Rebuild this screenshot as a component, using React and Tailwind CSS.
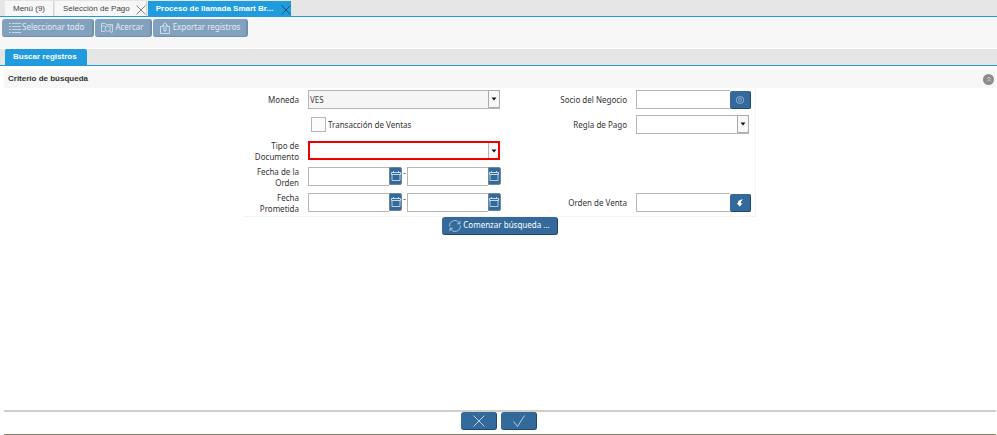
import { useState } from "react";

const toolButton =
  "flex h-[18px] items-center rounded-[3px] border-r-2 border-b border-[#6d90ad] bg-[#81a1be] text-[#e6ecf2]";
const actionButton =
  "flex items-center justify-center border-r border-b border-[#1d4a70] bg-[#336a9b] text-white";
const textInput =
  "h-[19px] min-w-0 border border-[#b5b5b5] bg-white px-px outline-none";

function CloseIcon({ className }) {
  return (
    <svg viewBox="0 0 10 10" className={className} fill="none" stroke="currentColor">
      <path d="M.5.5l9 9M9.5.5l-9 9" strokeWidth="0.8" />
    </svg>
  );
}

function ListIcon() {
  return (
    <svg viewBox="0 0 12 12" className="size-3" fill="none" stroke="currentColor" strokeWidth="0.7">
      <path d="M0 1.5h2M3 1.5h9M0 4.5h2M3 4.5h9M0 7.5h2M3 7.5h9M0 10.5h2M3 10.5h9" />
    </svg>
  );
}

function ZoomIcon() {
  return (
    <svg viewBox="0 0 12 12" className="size-3" fill="none" stroke="currentColor" strokeWidth="0.7">
      <path d="M4 9.500H.5v-8h4l1 1h6v7h-1M.5 4h4M9 4h2.500" />
      <circle cx="6.700" cy="6.700" r="2.600" />
      <path d="M8.600 8.600l2.600 3" />
    </svg>
  );
}

function ExportIcon() {
  return (
    <svg viewBox="0 0 12 12" className="size-3" fill="none" stroke="currentColor" strokeWidth="0.8">
      <path d="M4 4.500H1.500v7h9v-7H8M5 9V3.500H3.500L6 .7l2.500 2.800H7V9z" />
    </svg>
  );
}

function RefreshIcon() {
  return (
    <svg viewBox="0 0 12 12" className="size-3 text-[#c5d6e5]" fill="none" stroke="currentColor" strokeWidth="0.8">
      <path d="M.7 6.500A5.200 5.200 0 0 1 10.500 3.500M11.300 5.500A5.200 5.200 0 0 1 1.500 8.500" />
      <path d="M11 .8v3H8M1 11.200v-3h3" />
    </svg>
  );
}

function CalendarIcon() {
  return (
    <svg viewBox="0 0 10 10" className="size-[10px] shrink-0" fill="none" stroke="#d5e6f4">
      <path d="M1 3.500v6h8v-6" strokeWidth="0.8" />
      <path d="M.5 1.500h9v2h-9z" strokeWidth="0.9" />
      <path d="M2.500 0v2M7.500 0v2" strokeWidth="0.8" />
    </svg>
  );
}

function Tab({ label, active, closable }) {
  return (
    <div
      className={`flex h-[15px] items-center pl-2 ${
        active
          ? "bg-[#1f9bde] font-bold text-white"
          : "mr-px border-r border-[#d5d5d5] bg-[#f7f7f7] text-[#444]"
      } ${closable ? "pr-0" : "pr-2"}`}
    >
      <button type="button" className="whitespace-nowrap">{label}</button>
      {closable && (
        <button
          type="button"
          aria-label={`Cerrar ${label}`}
          className={`pt-0.5 ${active ? "ml-2 text-[#17415d]" : "ml-1.5 text-[#666]"}`}
        >
          <CloseIcon className="size-[10px]" />
        </button>
      )}
    </div>
  );
}

function Label({ htmlFor, children, second }) {
  return (
    <label
      htmlFor={htmlFor}
      className={`flex h-[23px] items-center justify-end text-right leading-[11px] ${second ? "col-start-3" : "col-start-1"}`}
    >
      {children}
    </label>
  );
}

function Combo({ id, options, className, disabled, required }) {
  return (
    <div className={`relative mt-0.5 h-[19px] ${className}`}>
      <select
        id={id}
        disabled={disabled}
        className={`block h-full w-full appearance-none px-px text-[#444] opacity-100 outline-none ${
          required ? "border-2 border-[#f00000]" : "border border-[#b5b5b5]"
        } ${disabled ? "bg-[#f5f5f5]" : "bg-white"}`}
      >
        {options.map((option) => (
          <option key={option}>{option}</option>
        ))}
      </select>
      <span
        className={`pointer-events-none absolute flex items-center justify-center bg-[#f8f8f8] ${
          required
            ? "inset-y-0.5 right-0.5 w-[10px] border-l border-[#b5b5b5]"
            : "top-0 right-0 h-[18px] w-3 rounded-r-[2px] border border-[#aaa]"
        }`}
      >
        <svg viewBox="0 0 6 4" className="h-1 w-1.5" fill="#111">
          <path d="M.5.5h5L3 3.500z" />
        </svg>
      </span>
    </div>
  );
}

function DateInput({ id, label }) {
  return (
    <div className="flex">
      <input id={id} type="text" aria-label={label} className={`${textInput} w-[81px] border-r-0`} />
      <button
        type="button"
        aria-label="Abrir calendario"
        className="flex h-[18px] w-[13px] items-center justify-center rounded-r-[2px] border border-[#6f8799] bg-[#336a9b] pb-px"
      >
        <CalendarIcon />
      </button>
    </div>
  );
}

function DateRange({ id, label }) {
  return (
    <div className="mt-0.5 flex justify-between">
      <DateInput id={id} />
      <span className="leading-3">-</span>
      <DateInput id={`${id}-hasta`} label={`${label} hasta`} />
    </div>
  );
}

function LookupInput({ id, label, children }) {
  return (
    <div className="mt-0.5 flex">
      <input id={id} type="text" className={`${textInput} flex-1 border-r-0`} />
      <button
        type="button"
        aria-label={label}
        className={`${actionButton} mt-px h-[18px] w-[21px] rounded-[2px]`}
      >
        {children}
      </button>
    </div>
  );
}

export default function App() {
  const [salesTransaction, setSalesTransaction] = useState(false);

  return (
    <div className="flex min-h-screen flex-col bg-white font-['Noto_Sans',sans-serif] text-[8px] text-[#333]">
      <nav className="flex h-[17px] items-end border-b border-[#1f9bde] bg-[#e6e6e6] pl-[5px] font-['Liberation_Sans',sans-serif]">
        <Tab label="Menú (9)" />
        <Tab label="Selección de Pago" closable />
        <Tab label="Proceso de llamada Smart Br..." active closable />
      </nav>

      <div className="flex h-8 items-start gap-px border-b border-white bg-[#f7f7f7] pt-0.5 pl-0.5">
        <button type="button" className={`${toolButton} gap-px pr-2 pl-[7px]`}>
          <ListIcon />
          <span className="pb-0.5">Seleccionar todo</span>
        </button>
        <button type="button" className={`${toolButton} gap-0.5 px-1.5`}>
          <ZoomIcon />
          <span className="pb-0.5">Acercar</span>
        </button>
        <button type="button" className={`${toolButton} gap-0.5 px-1.5`}>
          <ExportIcon />
          <span className="pb-0.5">Exportar registros</span>
        </button>
      </div>

      <nav className="flex h-[17px] items-end border-b border-[#1f9bde] bg-[#e6e6e6] pl-[5px] font-['Liberation_Sans',sans-serif]">
        <button
          type="button"
          className="h-4 rounded-t-[2px] bg-[#1f9bde] pr-2.5 pl-2 font-bold text-white"
        >
          Buscar registros
        </button>
      </nav>

      <main className="flex flex-1 flex-col pt-1 pr-px pl-1">
        <header className="flex h-[18px] items-center justify-between bg-[#f7f7f7] pr-0.5 pl-1">
          <h2 className="font-['Liberation_Sans',sans-serif] font-bold">
            Criterio de búsqueda
          </h2>
          <button
            type="button"
            aria-label="Contraer"
            className="flex size-[11px] items-center justify-center rounded-full bg-[#8c8c8c] text-[#ddd]"
          >
            <svg viewBox="0 0 6 6" className="size-1.5" fill="none" stroke="currentColor" strokeWidth="0.8">
              <path d="M1 3l2-2 2 2M1 5.500l2-2 2 2" />
            </svg>
          </button>
        </header>

        <form className="flex flex-col items-center" onSubmit={(event) => event.preventDefault()}>
          <div className="grid grid-cols-[55px_193px_117px_115px] grid-rows-[25px_26px_26px_26px_25px] items-start gap-x-[9px] border-r border-b border-[#f5f5f5] pr-1">
            <Label htmlFor="moneda">Moneda</Label>
            <Combo id="moneda" options={["VES"]} className="mr-px" disabled />
            <Label htmlFor="socio" second>Socio del Negocio</Label>
            <LookupInput id="socio" label="Buscar socio">
              <svg viewBox="0 0 8 8" className="size-2" fill="none" stroke="#a9c3da" strokeWidth="0.8">
                <rect x=".5" y=".8" width="7" height="6.400" rx="2.500" />
                <rect x="2.600" y="2.500" width="2.800" height="2.600" rx="1" />
              </svg>
            </LookupInput>

            <label className="col-start-2 ml-[3px] flex h-[23px] items-center gap-0.5">
              <input
                type="checkbox"
                checked={salesTransaction}
                onChange={(event) => setSalesTransaction(event.target.checked)}
                className="size-[15px] appearance-none border border-[#b5b5b5] bg-[#fcfcfc] checked:bg-[#336a9b]"
              />
              Transacción de Ventas
            </label>
            <Label htmlFor="regla" second>Regla de Pago</Label>
            <Combo id="regla" options={[""]} className="mr-0.5" />

            <Label htmlFor="tipo">
              Tipo de
              <br />
              Documento
            </Label>
            <Combo id="tipo" options={[""]} className="mr-px" required />

            <Label htmlFor="fecha-orden">Fecha de la Orden</Label>
            <DateRange id="fecha-orden" label="Fecha de la Orden" />

            <Label htmlFor="fecha-prometida">Fecha Prometida</Label>
            <DateRange id="fecha-prometida" label="Fecha Prometida" />
            <Label htmlFor="orden-venta" second>Orden de Venta</Label>
            <LookupInput id="orden-venta" label="Buscar orden">
              <svg viewBox="0 0 8 8" className="size-2" fill="currentColor">
                <path d="M7.200.5C4 .3 1.800 1.500 2 4H.7l3 3.600L6.500 4.400H5.100C4.900 3 5.200 1.500 7.200.5z" />
              </svg>
            </LookupInput>
          </div>

          <button
            type="submit"
            className={`${actionButton} h-[18px] gap-0.5 rounded-[3px] px-[7px]`}
          >
            <RefreshIcon />
            <span className="pb-0.5">Comenzar búsqueda ...</span>
          </button>
        </form>

        <footer className="mt-auto flex h-[25px] items-start justify-center gap-1 border-t-2 border-b border-t-[#d0d0c8] border-b-[#8c8468] pr-0.5">
          <button type="button" aria-label="Cancelar" className={`${actionButton} h-[18px] w-9 rounded-[3px]`}>
            <CloseIcon className="size-3 text-[#c5d6e5]" />
          </button>
          <button type="button" aria-label="Aceptar" className={`${actionButton} h-[18px] w-9 rounded-[3px]`}>
            <svg viewBox="0 0 12 12" className="size-3 text-[#c5d6e5]" fill="none" stroke="currentColor" strokeWidth="0.9">
              <path d="M.5 6.500l4 5 7-11" />
            </svg>
          </button>
        </footer>
      </main>
    </div>
  );
}
